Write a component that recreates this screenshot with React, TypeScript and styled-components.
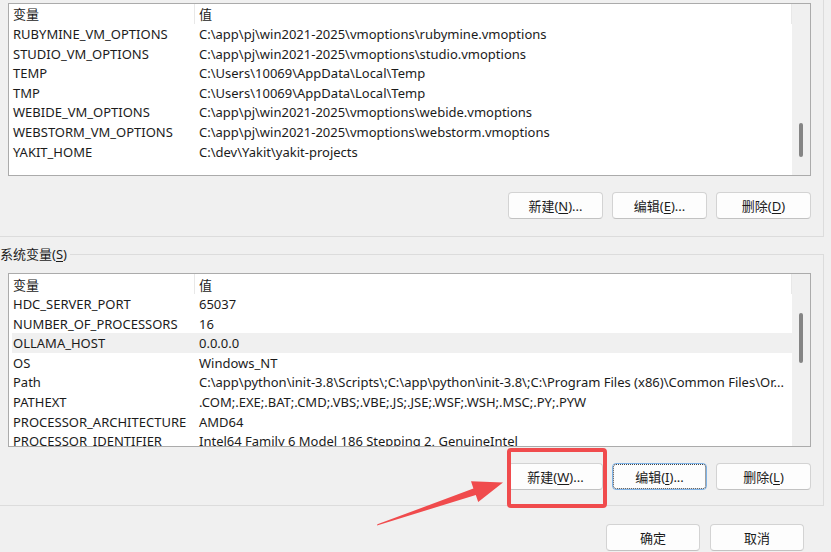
import React from 'react'
import styled, { createGlobalStyle, css } from 'styled-components'

const GlobalStyle = createGlobalStyle`
  html, body {
    margin: 0;
    padding: 0;
    background: #f0f0f0;
  }
  body {
    font-family: "Noto Sans", "Noto Sans CJK SC", sans-serif;
    font-size: 13px;
    color: #1b1b1b;
  }
`

const Page = styled.div`
  position: relative;
  width: 831px;
  height: 552px;
  overflow: hidden;
  background: #f0f0f0;
`

const UserGroup = styled.section`
  box-sizing: border-box;
  width: 824px;
  height: 237px;
  padding: 3px 0 0 8px;
  border-right: 1px solid #dcdcdc;
  border-bottom: 1px solid #dcdcdc;
`

const SysGroup = styled.fieldset`
  box-sizing: border-box;
  width: 824px;
  min-inline-size: 0;
  margin: 8px 0 0;
  padding: 10px 0 15px 0;
  border: 1px solid #dcdcdc;
  border-left: none;
`

const Legend = styled.legend`
  padding: 0 3px 0 0;
  line-height: 18px;
`

const GroupBody = styled.div`
  padding-left: 8px;
`

const ListBox = styled.div<{ $height: number }>`
  box-sizing: border-box;
  display: flex;
  width: 803px;
  height: ${p => p.$height}px;
  background: #fff;
  border: 1px solid #ababab;
`

const ListBody = styled.div`
  flex: 1;
  overflow: hidden;
`

const HeaderRow = styled.div<{ $shift?: number }>`
  display: grid;
  grid-template-columns: 186px 1fr;
  height: 20px;
`

const HeaderCell = styled.div<{ $shift?: number }>`
  box-sizing: border-box;
  padding-left: 4px;
  padding-top: ${p => p.$shift ?? 0}px;
  line-height: 20px;
  height: 20px;
  overflow: hidden;
  border-right: 1px solid #e8e8e8;
`

const Row = styled.div<{ $selected?: boolean }>`
  box-sizing: border-box;
  display: grid;
  grid-template-columns: 183px 1fr;
  margin-left: 3px;
  height: 19.6px;
  padding-top: 1px;
  line-height: 19.6px;
  overflow: hidden;
  background: ${p => (p.$selected ? '#f0f0f0' : 'transparent')};
`

const NameCell = styled.div`
  padding-left: 1px;
  white-space: nowrap;
  overflow: hidden;
`

const ValueCell = styled.div`
  padding-left: 4px;
  white-space: nowrap;
  overflow: hidden;
`

const Track = styled.div`
  display: flex;
  justify-content: center;
  width: 18px;
  background: #f0f0f0;
`

const Thumb = styled.div<{ $top: number; $length: number }>`
  width: 4px;
  height: ${p => p.$length}px;
  margin-top: ${p => p.$top}px;
  border-radius: 2px;
  background: #858585;
`

const ButtonRow = styled.div`
  display: flex;
  justify-content: flex-end;
  gap: 9px;
  width: 803px;
  margin-top: 16px;
`

const Footer = styled.div`
  display: flex;
  justify-content: flex-end;
  gap: 10px;
  padding-right: 27px;
  margin-top: 18px;
`

const Button = styled.button<{ $focused?: boolean; $w?: number }>`
  box-sizing: border-box;
  width: ${p => p.$w ?? 95}px;
  height: 27px;
  padding: 0;
  background: #fdfdfd;
  border: 1px solid #d3d3d3;
  border-bottom-color: #c2c2c2;
  border-radius: 4px;
  font: inherit;
  color: #1b1b1b;
  ${p =>
    p.$focused &&
    css`
      border-color: #7eb2e6;
      outline: 1px dotted #444;
      outline-offset: -2px;
    `}
`

const Key = styled.span`
  text-decoration: underline;
  text-underline-offset: 2px;
`

const Overlay = styled.svg`
  position: absolute;
  left: 0;
  top: 0;
  pointer-events: none;
`

type EnvVar = { name: string; value: string; selected?: boolean }

const userVars: EnvVar[] = [
  { name: 'RUBYMINE_VM_OPTIONS', value: 'C:\\app\\pj\\win2021-2025\\vmoptions\\rubymine.vmoptions' },
  { name: 'STUDIO_VM_OPTIONS', value: 'C:\\app\\pj\\win2021-2025\\vmoptions\\studio.vmoptions' },
  { name: 'TEMP', value: 'C:\\Users\\10069\\AppData\\Local\\Temp' },
  { name: 'TMP', value: 'C:\\Users\\10069\\AppData\\Local\\Temp' },
  { name: 'WEBIDE_VM_OPTIONS', value: 'C:\\app\\pj\\win2021-2025\\vmoptions\\webide.vmoptions' },
  { name: 'WEBSTORM_VM_OPTIONS', value: 'C:\\app\\pj\\win2021-2025\\vmoptions\\webstorm.vmoptions' },
  { name: 'YAKIT_HOME', value: 'C:\\dev\\Yakit\\yakit-projects' },
]

const sysVars: EnvVar[] = [
  { name: 'HDC_SERVER_PORT', value: '65037' },
  { name: 'NUMBER_OF_PROCESSORS', value: '16' },
  { name: 'OLLAMA_HOST', value: '0.0.0.0', selected: true },
  { name: 'OS', value: 'Windows_NT' },
  {
    name: 'Path',
    value:
      'C:\\app\\python\\init-3.8\\Scripts\\;C:\\app\\python\\init-3.8\\;C:\\Program Files (x86)\\Common Files\\Or...',
  },
  { name: 'PATHEXT', value: '.COM;.EXE;.BAT;.CMD;.VBS;.VBE;.JS;.JSE;.WSF;.WSH;.MSC;.PY;.PYW' },
  { name: 'PROCESSOR_ARCHITECTURE', value: 'AMD64' },
  { name: 'PROCESSOR_IDENTIFIER', value: 'Intel64 Family 6 Model 186 Stepping 2, GenuineIntel' },
]

const VarList: React.FC<{
  vars: EnvVar[]
  height: number
  thumbTop: number
  thumbLength: number
  headerShift?: number
}> = ({ vars, height, thumbTop, thumbLength, headerShift }) => (
  <ListBox $height={height}>
    <ListBody>
      <HeaderRow>
        <HeaderCell $shift={headerShift}>变量</HeaderCell>
        <HeaderCell $shift={headerShift}>值</HeaderCell>
      </HeaderRow>
      {vars.map(v => (
        <Row key={v.name} $selected={v.selected}>
          <NameCell>{v.name}</NameCell>
          <ValueCell>{v.value}</ValueCell>
        </Row>
      ))}
    </ListBody>
    <Track>
      <Thumb $top={thumbTop} $length={thumbLength} />
    </Track>
  </ListBox>
)

const App: React.FC = () => {
  return (
    <Page>
      <GlobalStyle />
      <UserGroup>
        <VarList vars={userVars} height={173} thumbTop={119} thumbLength={34} />
        <ButtonRow>
          <Button>
            新建(<Key>N</Key>)...
          </Button>
          <Button>
            编辑(<Key>E</Key>)...
          </Button>
          <Button>
            删除(<Key>D</Key>)
          </Button>
        </ButtonRow>
      </UserGroup>

      <SysGroup>
        <Legend>
          系统变量(<Key>S</Key>)
        </Legend>
        <GroupBody>
          <VarList vars={sysVars} height={174} thumbTop={39} thumbLength={50} headerShift={1} />
          <ButtonRow>
            <Button>
              新建(<Key>W</Key>)...
            </Button>
            <Button $focused>
              编辑(<Key>I</Key>)...
            </Button>
            <Button>
              删除(<Key>L</Key>)
            </Button>
          </ButtonRow>
        </GroupBody>
      </SysGroup>

      <Footer>
        <Button $w={94}>确定</Button>
        <Button $w={94}>取消</Button>
      </Footer>

      {/* screenshot annotation: red box and arrow */}
      <Overlay width={831} height={552} viewBox="0 0 831 552">
        <rect x={509} y={450} width={96} height={56} rx={2} fill="none" stroke="#f04b4d" strokeWidth={4} />
        <polygon
          points="377,525.5 377.4,524.3 473.4,488.6 471,481.3 503,482.5 478.2,502.1 475.8,495 "
          fill="#f04b4d"
        />
      </Overlay>
    </Page>
  )
}

export default App
